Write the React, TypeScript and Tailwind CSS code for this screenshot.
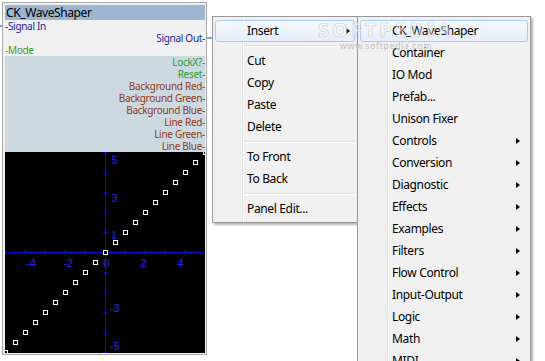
import React from "react";

function MenuItem({ label, hl, arrow, arrowRight }: { label: string; hl?: boolean; arrow?: boolean; arrowRight?: string }) {
  return (
    <div className="relative h-[22px] flex items-center pl-[32px] text-[12px] tracking-[-0.35px] text-black leading-none">
      {hl && (
        <div className="absolute inset-0 rounded-[3px] border border-[#a9cbf1] bg-gradient-to-b from-[#f5f9fe] to-[#e4edf9]" />
      )}
      <span className="relative">{label}</span>
      {arrow && (
        <div
          className={`absolute top-[8px] w-0 h-0 border-y-[3px] border-y-transparent border-l-[4px] border-l-black ${arrowRight === "5" ? "right-[5px]" : "right-[8px]"}`}
        />
      )}
    </div>
  );
}

function Sep() {
  return (
    <div className="h-[8px] flex items-center pl-[28px]">
      <div className="h-[2px] w-full border-t border-[#e0e0e0] border-b border-b-white" />
    </div>
  );
}

function Graph() {
  const pts = [] as number[];
  for (let j = -10; j <= 10; j++) pts.push(j);
  const ticks = [] as number[];
  for (let k = 0; k <= 10; k++) ticks.push(k * 20);
  const blue = "#0d0dd8";
  const lbl = "#2a2aff";
  return (
    <svg width={200} height={201} className="block bg-black" shapeRendering="crispEdges">
      <line x1={0} y1={100.5} x2={200} y2={100.5} stroke={blue} strokeWidth={1} />
      <line x1={100.5} y1={0} x2={100.5} y2={201} stroke={blue} strokeWidth={1} />
      {ticks.map((t) => (
        <line key={"h" + t} x1={t + 0.5} y1={98} x2={t + 0.5} y2={103} stroke={blue} strokeWidth={1} />
      ))}
      {ticks.map((t) => (
        <line key={"v" + t} x1={98} y1={t + 0.5} x2={103} y2={t + 0.5} stroke={blue} strokeWidth={1} />
      ))}
      <g fill={lbl} fontFamily="'Liberation Sans', sans-serif" fontSize={11} textAnchor="middle">
        <text x={25.9} y={114.7}>-4</text>
        <text x={63.3} y={114.7}>-2</text>
        <text x={101.3} y={114.7}>0</text>
        <text x={138.5} y={114.7}>2</text>
        <text x={175.2} y={114.7}>4</text>
        <text x={109.5} y={12}>5</text>
        <text x={109.5} y={50.3}>3</text>
        <text x={109} y={87}>1</text>
        <text x={109.7} y={160}>-3</text>
        <text x={109.7} y={198}>-5</text>
      </g>
      {pts.map((j) => {
        const cx = 100 + 10 * j;
        const cy = 100 - 10 * j;
        return (
          <rect key={j} x={cx - 1.5} y={cy - 1.5} width={4} height={4} fill="black" stroke="white" strokeWidth={1} />
        );
      })}
    </svg>
  );
}

export default function App() {
  const labelsRight: { t: string; c: string }[] = [
    { t: "LockX?-", c: "text-[#2f9a2f]" },
    { t: "Reset-", c: "text-[#2f9a2f]" },
    { t: "Background Red-", c: "text-[#8c3a1c]" },
    { t: "Background Green-", c: "text-[#8c3a1c]" },
    { t: "Background Blue-", c: "text-[#8c3a1c]" },
    { t: "Line Red-", c: "text-[#8c3a1c]" },
    { t: "Line Green-", c: "text-[#8c3a1c]" },
    { t: "Line Blue-", c: "text-[#8c3a1c]" },
  ];
  const sub: { t: string; a?: boolean }[] = [
    { t: "Container" },
    { t: "IO Mod" },
    { t: "Prefab..." },
    { t: "Unison Fixer" },
    { t: "Controls", a: true },
    { t: "Conversion", a: true },
    { t: "Diagnostic", a: true },
    { t: "Effects", a: true },
    { t: "Examples", a: true },
    { t: "Filters", a: true },
    { t: "Flow Control", a: true },
    { t: "Input-Output", a: true },
    { t: "Logic", a: true },
    { t: "Math", a: true },
    { t: "MIDI", a: true },
  ];
  return (
    <div className="relative w-[545px] h-[361px] overflow-hidden bg-white font-['Noto_Sans',sans-serif]">
      <div className="pt-[2px] pl-[2px]">
        <div className="w-[205px] border border-[#a8a8a8] bg-[#f0f0f0] pt-[2px] pl-[2px] pr-[1px] pb-[1px]">
          <div className="h-[15px] bg-[#9cb5d1] text-[12px] leading-[15px] pl-[1px] text-black tracking-[-0.4px]">
            CK_WaveShaper
          </div>
          <div className="bg-[#f0f0f0] text-[10px] leading-[12px] tracking-[-0.3px]">
            <div className="h-[12px] text-[#23239a]">-Signal In</div>
            <div className="h-[12px] text-right text-[#23239a]">Signal Out-</div>
            <div className="h-[12px] text-[#3a9e2a]">-Mode</div>
          </div>
          <div className="bg-[#cdd9e0] text-[10px] leading-[12px] tracking-[-0.3px]">
            {labelsRight.map((l) => (
              <div key={l.t} className={`h-[12px] text-right ${l.c}`}>
                {l.t}
              </div>
            ))}
          </div>
          <Graph />
        </div>
      </div>

      {/* pins */}
      <div className="absolute left-0 top-[25px] w-[2px] h-[2px] bg-[#7b9ade]" />
      <div className="absolute left-[207px] top-[37px] w-[5px] h-[2px] bg-[#86a2e0]" />

      {/* context menu */}
      <div className="absolute left-[212px] top-[16px] w-[146px] h-[207px] border border-[#979797] bg-[#f0f0f0] shadow-[2px_2px_2px_rgba(0,0,0,0.3)] pt-[3px] px-[2px]">
        <div className="absolute left-[29px] top-0 bottom-0 w-[2px] border-l border-[#e2e3e3] border-r border-r-white" />
        <MenuItem label="Insert" hl arrow arrowRight="5" />
        <Sep />
        <MenuItem label="Cut" />
        <MenuItem label="Copy" />
        <MenuItem label="Paste" />
        <MenuItem label="Delete" />
        <Sep />
        <MenuItem label="To Front" />
        <MenuItem label="To Back" />
        <Sep />
        <MenuItem label="Panel Edit..." />
      </div>

      {/* submenu */}
      <div className="absolute left-[357px] top-[16px] w-[174px] h-[380px] border border-[#979797] bg-[#f0f0f0] shadow-[2px_2px_2px_rgba(0,0,0,0.3)] pt-[3px] px-[2px]">
        <div className="absolute left-[29px] top-0 bottom-0 w-[2px] border-l border-[#e2e3e3] border-r border-r-white" />
        <MenuItem label="CK_WaveShaper" hl />
        {sub.map((s) => (
          <MenuItem key={s.t} label={s.t} arrow={s.a} />
        ))}
      </div>

      {/* watermark */}
      <div className="absolute left-[318px] top-[20px] text-[20px] font-bold tracking-[3px] text-white/40 [-webkit-text-stroke:0.6px_#cfcfcf] leading-none">
        SOFTPEDIA
      </div>
      <div className="absolute left-[340px] top-[41px] text-[9px] tracking-[0.5px] text-[#c4c4c4] leading-none">
        www.softpedia.com
      </div>
    </div>
  );
}
